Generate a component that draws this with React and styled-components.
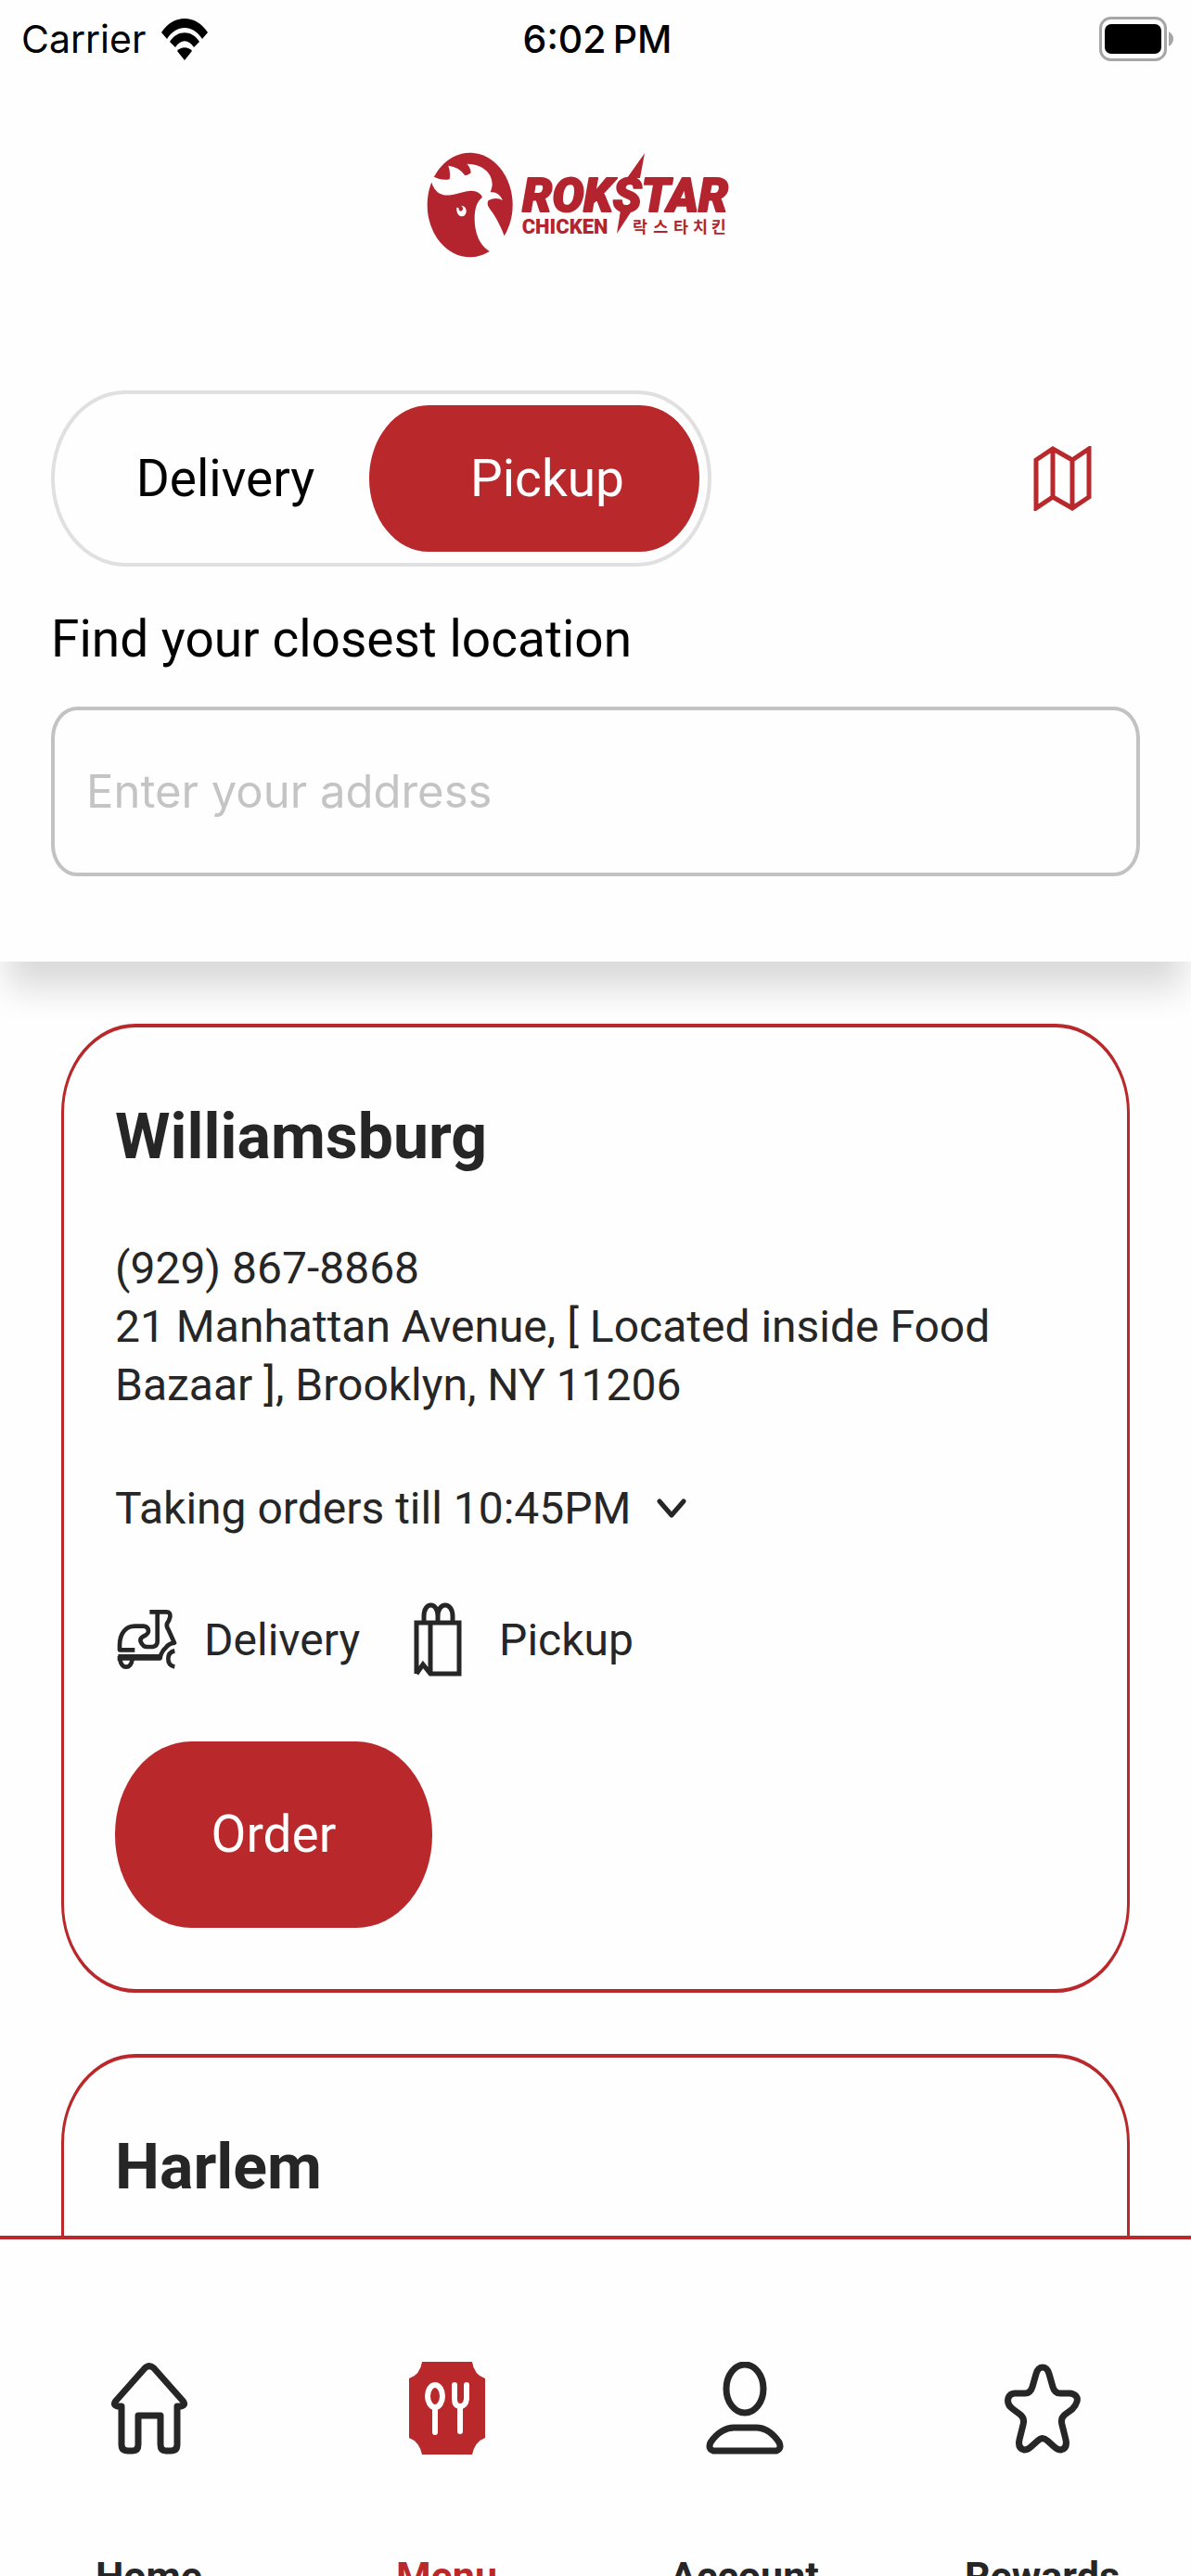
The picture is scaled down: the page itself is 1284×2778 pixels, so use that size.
// src/App.jsx

import React, { useState } from 'react';
import styled, { createGlobalStyle } from 'styled-components';

const GlobalStyle = createGlobalStyle`
	:root {
		--red: #b9292c;
		--ink: #262626;
		--background: #fefefe;
		--body-font: Roboto, 'Liberation Sans', sans-serif;
		--system-font: Inter, 'Liberation Sans', sans-serif;
	}
	* {
		box-sizing: border-box;
	}
	body {
		margin: 0;
		background: var(--background);
		color: var(--ink);
		font-family: var(--body-font);
	}
	button {
		margin: 0;
		padding: 0;
		border: 0;
		background: none;
		color: inherit;
		font: inherit;
		cursor: pointer;
	}
	svg {
		display: block;
		flex: none;
	}
`;

const Screen = styled.div`
	display: flex;
	flex-direction: column;
	height: 100vh;
	overflow: hidden;
`;

/************************/
/*        HEADER        */
/************************/

const Header = styled.header`
	position: relative;
	z-index: 1;
	flex: none;
	padding-bottom: 92px;
	background: var(--background);
	box-shadow: 0 36px 36px -8px rgba(0, 0, 0, 0.15);
`;

const StatusBar = styled.div`
	display: grid;
	grid-template-columns: 1fr auto 1fr;
	align-items: center;
	height: 84px;
	padding: 0 19px 0 23px;
	color: #000;
	font-family: var(--system-font);
	font-size: 41px;
`;

const Carrier = styled.div`
	display: flex;
	align-items: center;
	gap: 16px;
`;

const Clock = styled.time`
	font-weight: 500;
`;

const Battery = styled.div`
	justify-self: end;
`;

const Brand = styled.h1`
	display: flex;
	justify-content: center;
	margin: 0;
	padding: 80px 32px 143px 0;
`;

const ModeRow = styled.div`
	display: flex;
	align-items: center;
	justify-content: space-between;
	margin: 0 107px 0 55px;
`;

const Toggle = styled.div`
	display: grid;
	grid-template-columns: 338px 356px;
	height: 190px;
	padding: 12px 9px 12px 1px;
	border: 4px solid #e0e0e0;
	border-radius: 80px / 95px;
`;

const ToggleButton = styled.button`
	padding-left: 28px;
	border-radius: 64px / 79px;
	background: ${(props) => (props.$active ? 'var(--red)' : 'transparent')};
	color: ${(props) => (props.$active ? '#fff' : '#000')};
	font-size: 55px;
`;

const MapButton = styled.button`
	color: var(--red);
`;

const SearchForm = styled.form`
	display: flex;
	flex-direction: column;
	gap: 41px;
	margin: 46px 55px 0;
	color: #000;
	font-size: 55px;
	line-height: 64px;
`;

const AddressInput = styled.input`
	width: 100%;
	height: 183px;
	padding: 0 34px;
	border: 4px solid #c2c2c2;
	border-radius: 28px / 34px;
	background: transparent;
	color: #000;
	font-family: var(--system-font);
	font-size: 49px;
	outline: none;
	&::placeholder {
		color: #c4c4c4;
		opacity: 1;
	}
`;

/************************/
/*      LOCATIONS       */
/************************/

const Locations = styled.main`
	display: flex;
	flex: 1;
	flex-direction: column;
	gap: 66px;
	min-height: 0;
	padding: 67px 66px 0;
	overflow: hidden;
`;

const Card = styled.article`
	display: flex;
	flex: none;
	flex-direction: column;
	align-items: flex-start;
	gap: 70px;
	min-height: 600px;
	padding: 78px 55px 66px;
	border: solid var(--red);
	border-width: 4px 3px;
	border-radius: 80px / 96px;
	font-size: 48px;
	line-height: 63px;
`;

const CardTitle = styled.h2`
	margin: 0;
	font-size: 68px;
	line-height: 80px;
`;

const Address = styled.address`
	font-style: normal;
`;

const Phone = styled.a`
	color: inherit;
	text-decoration: none;
`;

const Hours = styled.button`
	display: flex;
	align-items: center;
	gap: 28px;
`;

const Services = styled.ul`
	display: flex;
	gap: 54px;
	margin: 0;
	padding: 0;
	list-style: none;
`;

const Service = styled.li`
	display: flex;
	align-items: center;
	gap: 28px;
	height: 80px;
`;

const OrderButton = styled.button`
	width: 342px;
	height: 201px;
	border-radius: 82px / 100px;
	background: var(--red);
	color: #fff;
	font-size: 55px;
`;

/************************/
/*        TAB BAR       */
/************************/

const TabBar = styled.nav`
	display: grid;
	flex: none;
	grid-template-columns: repeat(4, 1fr);
	height: 367px;
	padding-top: 132px;
	border-top: 4px solid var(--red);
	background: var(--background);
	overflow: hidden;
`;

const Tab = styled.a`
	display: flex;
	flex-direction: column;
	align-items: center;
	gap: 106px;
	color: ${(props) => (props.$active ? 'var(--red)' : 'var(--ink)')};
	font-size: 43px;
	font-weight: 700;
	line-height: 50px;
	text-decoration: none;
`;

/************************/
/*        ICONS         */
/************************/

const WifiIcon = () => (
	<svg width='52' height='46' viewBox='0 0 52 46' aria-hidden='true'>
		<path d='M1 16C14-4 38-4 51 16L45 23C35 7 17 7 7 23Z' />
		<path d='M10 26C18 13 34 13 42 26L36 32C30 23 22 23 16 32Z' />
		<path d='M18 36C22 31 30 31 34 36L26 46Z' />
	</svg>
);

const BatteryIcon = () => (
	<svg width='80' height='48' viewBox='0 0 80 48' role='img' aria-label='Battery full'>
		<rect x='1.5' y='1.5' width='70' height='45' rx='11' fill='none' stroke='#a6a6a6' strokeWidth='3' />
		<rect x='6' y='8' width='61' height='32' rx='7' />
		<path d='M75 16Q80 19 80 24T75 32Z' fill='#a6a6a6' />
	</svg>
);

const Logo = () => (
	<svg width='333' height='114' viewBox='60 40 999 342' role='img' aria-label='Rokstar Chicken' fill='#b3242f'>
		<ellipse cx='200' cy='211' rx='138' ry='169' />
		<path
			fill='#fefefe'
			d='M50 150L76 116Q106 134 134 128Q138 104 130 84Q166 88 184 116Q196 114 203 107Q202 90 190 78C240 78 274 108 272 148Q270 160 266 170Q292 166 306 196Q284 184 260 196Q252 208 264 224Q280 244 296 276Q306 296 312 314L350 390L262 360C230 340 214 300 215 250C216 216 226 196 240 186Q228 162 196 166C160 172 130 188 102 174Q84 166 74 134Z'
		/>
		<path fill='#fefefe' d='M157 220Q164 216 165 228Q172 236 178 224Q176 216 172 213Q186 214 188 228C190 256 154 256 157 220Z' />
		<text
			x='370'
			y='231'
			fontFamily='Roboto, sans-serif'
			fontSize='152'
			fontWeight='900'
			fontStyle='italic'
			stroke='#b3242f'
			strokeWidth='6'
			strokeLinejoin='round'
		>
			ROKSTAR
		</text>
		<path d='M765 44L750 124H708ZM675 304L688 222H728Z' />
		<text x='368' y='305' fontFamily='Roboto, sans-serif' fontSize='66' fontWeight='900'>
			CHICKEN
		</text>
		<text x='726 793 858 921 980' y='301' fontFamily='"Noto Sans CJK KR", sans-serif' fontSize='52' fontWeight='700'>
			락스타치킨
		</text>
	</svg>
);

const MapIcon = () => (
	<svg width='63' height='70' viewBox='0 0 63 70' fill='none' stroke='currentColor' strokeWidth='5' aria-hidden='true'>
		<path d='M3 15L21 3L42 15L60 3V55L42 67L21 55L3 67ZM21 3V55M42 15V67' />
	</svg>
);

const ChevronIcon = () => (
	<svg width='32' height='22' viewBox='0 0 32 22' fill='none' stroke='currentColor' strokeWidth='5' aria-hidden='true'>
		<path d='M3 3L16 18L29 3' strokeLinecap='round' strokeLinejoin='round' />
	</svg>
);

const ScooterIcon = () => (
	<svg width='68' height='66' viewBox='12 40 204 198' fill='none' stroke='currentColor' strokeWidth='14' aria-hidden='true'>
		<g strokeLinejoin='round'>
			<path d='M124 50H178Q192 50 190 66L186 78Q174 92 184 106L204 150Q186 152 176 166Q160 180 158 200H20' />
			<path d='M76 173H27V158C27 118 48 96 76 96H104Q120 98 120 112Q120 122 102 130Q92 136 95 146Q102 163 116 163H134Q149 160 149 146V50' />
			<path d='M22 190H158' strokeWidth='6' />
			<path d='M28 203Q32 228 48 228T68 203' />
			<path d='M205 176Q184 180 184 202T205 227' />
		</g>
	</svg>
);

const BagIcon = () => (
	<svg width='68' height='80' viewBox='-4 0 68 80' fill='none' stroke='currentColor' strokeWidth='5' aria-hidden='true'>
		<path d='M3 77V22H49V77H18L10 67L3 77M18 22V77' />
		<path d='M11 22V15C11 -1 26 -1 26 15V22M26 15C26 -1 42 -1 42 15V22' />
	</svg>
);

const HomeIcon = () => (
	<svg width='82' height='100' viewBox='0 0 82 100' fill='none' stroke='currentColor' strokeWidth='7' aria-hidden='true'>
		<path
			strokeLinejoin='round'
			d='M11 48H7Q1 47 5 42L36 7Q41 2 46 7L77 42Q81 47 75 48H71V89Q71 96 64 96H59Q53 96 53 89V58H29V89Q29 96 23 96H18Q11 96 11 89Z'
		/>
	</svg>
);

const MenuIcon = () => (
	<svg width='82' height='100' viewBox='0 0 82 100' fill='none' stroke='#fff' strokeWidth='6' aria-hidden='true'>
		<path fill='currentColor' stroke='none' d='M14 0H68Q70 14 82 18V82Q71 86 68 100H14Q11 86 0 82V18Q12 14 14 0Z' />
		<ellipse cx='28' cy='37' rx='8' ry='12' />
		<path strokeLinecap='round' d='M28 50V76M49 25V40Q49 48 55 48T62 40V25M55 50V75' />
	</svg>
);

const AccountIcon = () => (
	<svg width='84' height='100' viewBox='0 0 84 100' fill='none' stroke='currentColor' strokeWidth='7' aria-hidden='true'>
		<ellipse cx='42' cy='29' rx='20' ry='26' />
		<path strokeLinejoin='round' d='M8 96Q2 94 5 87C13 75 23 71 30 71H54C62 71 71 75 79 87Q82 94 76 96Z' />
	</svg>
);

const StarIcon = () => (
	<svg width='82' height='100' viewBox='0 0 82 100' fill='none' stroke='currentColor' strokeWidth='7' aria-hidden='true'>
		<path d='M41 6Q46 6 48 13L52 27Q54 34 60 34H71Q80 36 78 43Q77 47 73 51L65 57Q60 61 62 68L66 84Q68 93 61 95Q57 95 54 92L46 85Q41 80 36 85L28 92Q25 95 21 95Q14 93 16 84L20 68Q22 61 17 57L9 51Q2 46 4 39Q6 34 11 34H22Q28 34 30 27L34 13Q36 6 41 6Z' />
	</svg>
);

const locations = [
	{
		name: 'Williamsburg',
		phone: '(929) 867-8868',
		address: '21 Manhattan Avenue, [ Located inside Food Bazaar ], Brooklyn, NY 11206',
		hours: 'Taking orders till 10:45PM',
	},
	{ name: 'Harlem' },
];

const tabs = [
	{ label: 'Home', Icon: HomeIcon },
	{ label: 'Menu', Icon: MenuIcon, active: true },
	{ label: 'Account', Icon: AccountIcon },
	{ label: 'Rewards', Icon: StarIcon },
];

function LocationCard({ name, phone, address, hours }) {
	return (
		<Card>
			<CardTitle>{name}</CardTitle>
			{phone && (
				<>
					<Address>
						<Phone href={`tel:${phone.replace(/\D/g, '')}`}>{phone}</Phone>
						<br />
						{address}
					</Address>
					<Hours type='button' aria-expanded='false'>
						{hours}
						<ChevronIcon />
					</Hours>
					<Services>
						<Service>
							<ScooterIcon />
							Delivery
						</Service>
						<Service>
							<BagIcon />
							Pickup
						</Service>
					</Services>
					<OrderButton type='button'>Order</OrderButton>
				</>
			)}
		</Card>
	);
}

export default function App() {
	const [mode, setMode] = useState('Pickup');

	return (
		<Screen>
			<GlobalStyle />
			<Header>
				<StatusBar>
					<Carrier>
						Carrier
						<WifiIcon />
					</Carrier>
					<Clock>6:02{'\u2009'}PM</Clock>
					<Battery>
						<BatteryIcon />
					</Battery>
				</StatusBar>
				<Brand>
					<Logo />
				</Brand>
				<ModeRow>
					<Toggle>
						{['Delivery', 'Pickup'].map((option) => (
							<ToggleButton
								key={option}
								type='button'
								$active={mode === option}
								aria-pressed={mode === option}
								onClick={() => setMode(option)}
							>
								{option}
							</ToggleButton>
						))}
					</Toggle>
					<MapButton type='button' aria-label='Show map'>
						<MapIcon />
					</MapButton>
				</ModeRow>
				<SearchForm onSubmit={(e) => e.preventDefault()}>
					<label htmlFor='address'>Find your closest location</label>
					<AddressInput id='address' type='text' placeholder='Enter your address' />
				</SearchForm>
			</Header>
			<Locations>
				{locations.map((location) => (
					<LocationCard key={location.name} {...location} />
				))}
			</Locations>
			<TabBar>
				{tabs.map(({ label, Icon, active }) => (
					<Tab key={label} href={`#${label.toLowerCase()}`} $active={active}>
						<Icon />
						{label}
					</Tab>
				))}
			</TabBar>
		</Screen>
	);
}
